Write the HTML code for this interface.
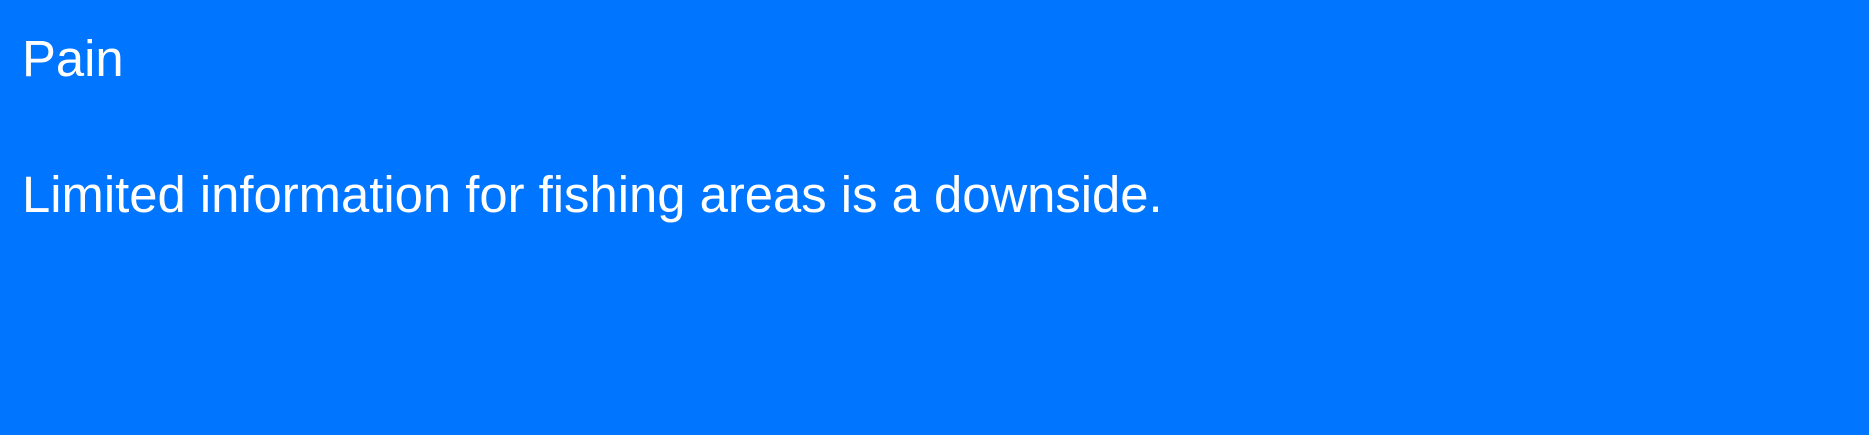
<!DOCTYPE html>
<html><head><style>
html,body{margin:0;padding:0;width:1869px;height:435px;background:#0075ff;overflow:hidden}
div{position:absolute;left:22px;color:#fff;font-family:"Liberation Sans",sans-serif;font-size:50.8px;line-height:50px;white-space:nowrap;letter-spacing:0px}
</style></head><body>
<div style="top:34px">Pain</div>
<div style="top:170px">Limited information for fishing areas is a downside.</div>
</body></html>
